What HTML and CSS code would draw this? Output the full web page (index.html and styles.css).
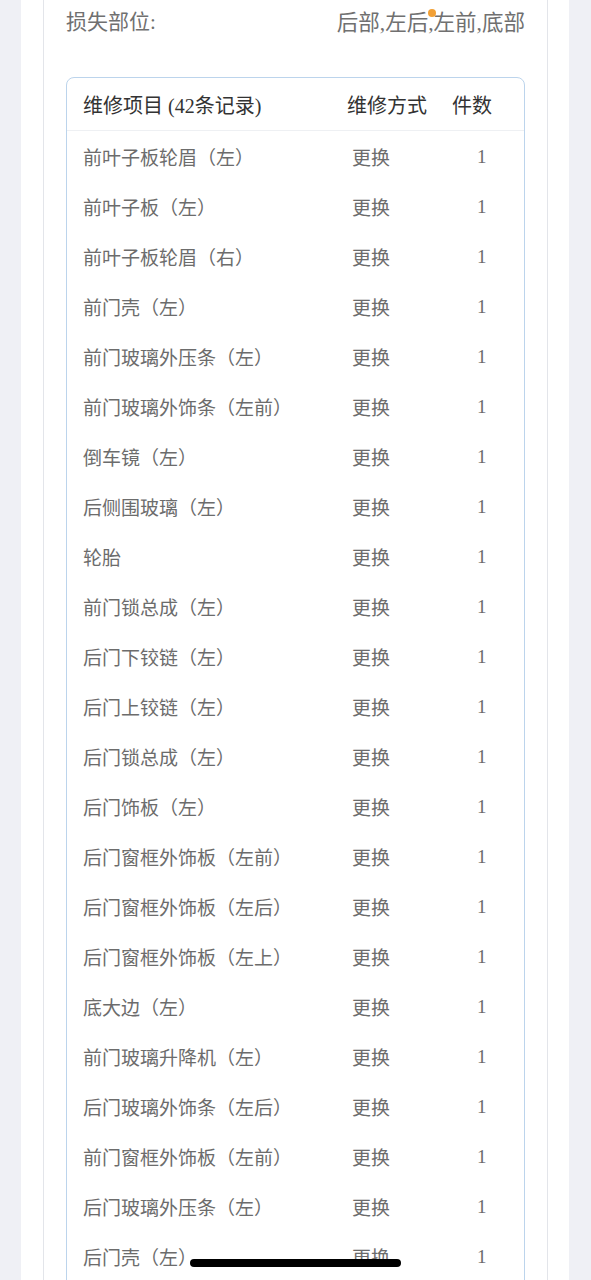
FILE: index.html
```html
<!DOCTYPE html>
<html lang="zh">
<head>
    <meta charset="UTF-8">
    <meta name="viewport" content="width=device-width, initial-scale=1.0">
    <title>维修项目</title>
    <link rel="stylesheet" href="styles.css">
</head>
<body>
    <div class="page">
        <div class="panel">
            <div class="card">
                <div class="info-row">
                    <span class="info-label">损失部位:</span>
                    <span class="info-value">后部,左后,左前,底部</span>
                </div>
                <div class="repair-table">
                    <div class="table-row table-head">
                        <div class="col-item">维修项目 (42条记录)</div>
                        <div class="col-method">维修方式</div>
                        <div class="col-count">件数</div>
                    </div>
                    <div class="table-row"><div class="col-item">前叶子板轮眉（左）</div><div class="col-method">更换</div><div class="col-count">1</div></div>
                    <div class="table-row"><div class="col-item">前叶子板（左）</div><div class="col-method">更换</div><div class="col-count">1</div></div>
                    <div class="table-row"><div class="col-item">前叶子板轮眉（右）</div><div class="col-method">更换</div><div class="col-count">1</div></div>
                    <div class="table-row"><div class="col-item">前门壳（左）</div><div class="col-method">更换</div><div class="col-count">1</div></div>
                    <div class="table-row"><div class="col-item">前门玻璃外压条（左）</div><div class="col-method">更换</div><div class="col-count">1</div></div>
                    <div class="table-row"><div class="col-item">前门玻璃外饰条（左前）</div><div class="col-method">更换</div><div class="col-count">1</div></div>
                    <div class="table-row"><div class="col-item">倒车镜（左）</div><div class="col-method">更换</div><div class="col-count">1</div></div>
                    <div class="table-row"><div class="col-item">后侧围玻璃（左）</div><div class="col-method">更换</div><div class="col-count">1</div></div>
                    <div class="table-row"><div class="col-item">轮胎</div><div class="col-method">更换</div><div class="col-count">1</div></div>
                    <div class="table-row"><div class="col-item">前门锁总成（左）</div><div class="col-method">更换</div><div class="col-count">1</div></div>
                    <div class="table-row"><div class="col-item">后门下铰链（左）</div><div class="col-method">更换</div><div class="col-count">1</div></div>
                    <div class="table-row"><div class="col-item">后门上铰链（左）</div><div class="col-method">更换</div><div class="col-count">1</div></div>
                    <div class="table-row"><div class="col-item">后门锁总成（左）</div><div class="col-method">更换</div><div class="col-count">1</div></div>
                    <div class="table-row"><div class="col-item">后门饰板（左）</div><div class="col-method">更换</div><div class="col-count">1</div></div>
                    <div class="table-row"><div class="col-item">后门窗框外饰板（左前）</div><div class="col-method">更换</div><div class="col-count">1</div></div>
                    <div class="table-row"><div class="col-item">后门窗框外饰板（左后）</div><div class="col-method">更换</div><div class="col-count">1</div></div>
                    <div class="table-row"><div class="col-item">后门窗框外饰板（左上）</div><div class="col-method">更换</div><div class="col-count">1</div></div>
                    <div class="table-row"><div class="col-item">底大边（左）</div><div class="col-method">更换</div><div class="col-count">1</div></div>
                    <div class="table-row"><div class="col-item">前门玻璃升降机（左）</div><div class="col-method">更换</div><div class="col-count">1</div></div>
                    <div class="table-row"><div class="col-item">后门玻璃外饰条（左后）</div><div class="col-method">更换</div><div class="col-count">1</div></div>
                    <div class="table-row"><div class="col-item">前门窗框外饰板（左前）</div><div class="col-method">更换</div><div class="col-count">1</div></div>
                    <div class="table-row"><div class="col-item">后门玻璃外压条（左）</div><div class="col-method">更换</div><div class="col-count">1</div></div>
                    <div class="table-row"><div class="col-item">后门壳（左）</div><div class="col-method">更换</div><div class="col-count">1</div></div>
                </div>
            </div>
        </div>
    </div>
    <div class="status-dot"></div>
    <div class="home-indicator"></div>
</body>
</html>
```

FILE: styles.css
```css
body {
    margin: 0;
    height: 1280px;
    overflow: hidden;
    background-color: #eff0f5;
    font-family: "Liberation Serif", "Noto Sans CJK SC", serif;
}
.page {
    padding: 0 22px 0 21px;
}
.panel {
    background-color: #ffffff;
    padding: 0 21px 0 22px;
    min-height: 1280px;
}
.card {
    border-left: 1px solid #e3e5ea;
    border-right: 1px solid #e3e5ea;
    padding: 0 22px;
    min-height: 1280px;
}
.info-row {
    display: flex;
    justify-content: space-between;
    align-items: center;
    height: 40px;
    font-size: 21px;
    color: #707070;
}
.info-value {
    font-size: 21.5px;
}
.repair-table {
    margin-top: 37px;
    padding-bottom: 60px;
    border: 1px solid #bcd4ec;
    border-radius: 8px;
}
.table-row {
    display: grid;
    grid-template-columns: 264px 105px 1fr;
    align-items: center;
    height: 50px;
    padding-left: 16px;
    font-size: 19px;
    color: #6c6c6c;
}
.table-head {
    height: 52px;
    border-bottom: 1px solid #eef0f3;
    font-size: 20px;
    color: #333333;
}
.table-row .col-method {
    padding-left: 5px;
}
.table-row .col-count {
    padding-left: 25px;
    padding-top: 2px;
}
.table-head .col-method,
.table-head .col-count {
    padding-left: 0;
    padding-top: 0;
}
.status-dot {
    position: fixed;
    left: 428px;
    top: 9px;
    width: 8px;
    height: 8px;
    border-radius: 50%;
    background-color: #f2a035;
}
.home-indicator {
    position: fixed;
    left: 190px;
    top: 1259px;
    width: 211px;
    height: 8px;
    border-radius: 4px;
    background-color: #000000;
}
```
